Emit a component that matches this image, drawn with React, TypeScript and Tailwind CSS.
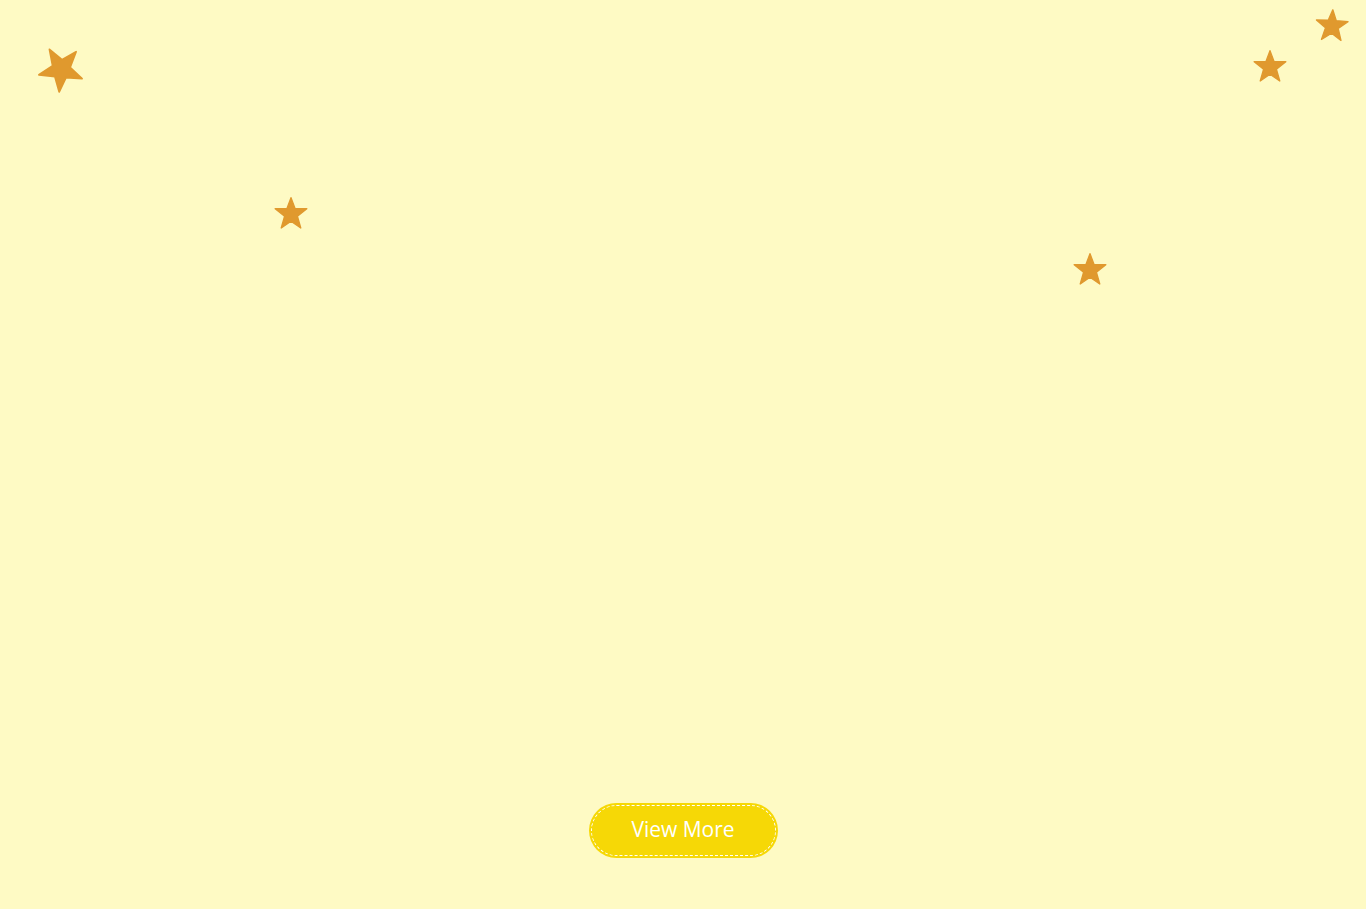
import React from "react";

function Star({ className }: { className: string }) {
  return (
    <svg viewBox="0 0 100 95" className={className} aria-hidden="true">
      <polygon
        points="50,2 62,34 97,35 69,57 79,92 50,72 21,92 31,57 3,35 38,34"
        fill="#e0992e"
        stroke="#e0992e"
        strokeWidth="4"
        strokeLinejoin="round"
      />
    </svg>
  );
}

export default function App() {
  return (
    <div className="relative flex min-h-[909px] w-full flex-col items-center justify-end overflow-hidden bg-[#fefac4] pb-[51px]">
      <Star className="absolute left-[38px] top-[49px] h-[44px] w-[46px] rotate-[185deg]" />
      <Star className="absolute left-[274px] top-[197px] h-[32px] w-[34px]" />
      <Star className="absolute left-[1073px] top-[253px] h-[32px] w-[34px]" />
      <Star className="absolute left-[1253px] top-[50px] h-[32px] w-[34px]" />
      <Star className="absolute left-[1315px] top-[9px] h-[32px] w-[34px] rotate-[3deg]" />
      <button className="flex h-[55px] w-[189px] items-center justify-center rounded-full bg-[#f6d806] p-[2px]">
        <span className="flex h-full w-full items-center justify-center rounded-full border-[1.5px] border-dashed border-white pb-[2px] font-['Open_Sans',sans-serif] text-[21px] font-medium text-white">
          View More
        </span>
      </button>
    </div>
  );
}
